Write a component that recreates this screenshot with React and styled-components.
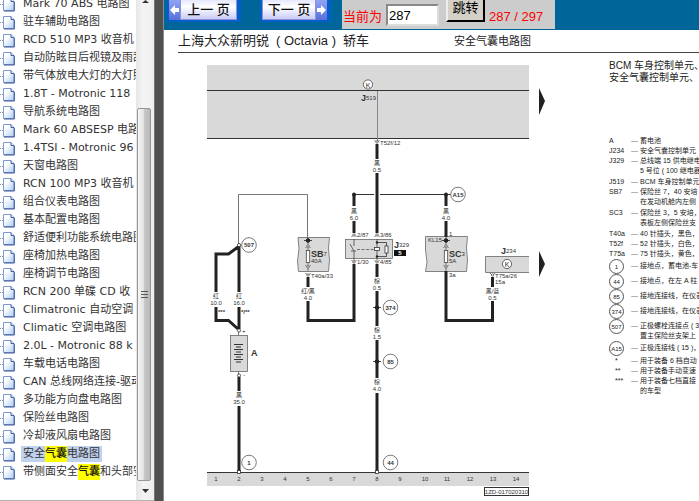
import React, { useState } from 'react';
import styled, { createGlobalStyle } from 'styled-components';

const GlobalStyle = createGlobalStyle`
  * {
    box-sizing: border-box;
  }

  body {
    margin: 0;
    background: #fff;
    color: #222;
    font-family: 'Liberation Sans', 'Noto Sans CJK SC', sans-serif;
    overflow: hidden;
  }
`;

const Layout = styled.div`
  display: grid;
  grid-template-columns: 154px 10px minmax(0, 1fr);
  height: 100vh;
`;

const Sidebar = styled.nav`
  display: grid;
  grid-template-columns: minmax(0, 1fr) 18px;
  min-height: 0;
  border-bottom: 1px solid #b4b4b4;
  overflow: hidden;
`;

const TreeList = styled.ul`
  margin: -5px 0 0;
  padding: 0;
  list-style: none;
  overflow: hidden;
`;

const TreeItem = styled.li`
  display: flex;
  align-items: center;
  height: 18px;

  &::before {
    content: '';
    flex: none;
    width: 3px;
    border-top: 1px dotted #888;
  }

  svg {
    flex: none;
  }
`;

const TreeLink = styled.a`
  margin-left: 6px;
  padding: 0 2px;
  background: ${({ $active }) => ($active ? '#c1d2ee' : 'transparent')};
  color: #333;
  font: 11px/16px 'DejaVu Sans', 'Noto Sans CJK SC', sans-serif;
  text-decoration: none;
  white-space: nowrap;

  mark {
    display: inline-block;
    background: #ff0;
    color: #111;
    font-weight: 500;
  }
`;

const Scrollbar = styled.div`
  display: flex;
  flex-direction: column;
  background: linear-gradient(to right, #e6e6e6, #f4f4f4 40%, #eee);
`;

const ScrollArrow = styled.button`
  display: flex;
  align-items: center;
  justify-content: center;
  height: ${({ $up }) => ($up ? '4px' : '19px')};
  padding: 0;
  border: 0;
  background: transparent;
`;

const ScrollTrack = styled.div`
  display: grid;
  flex: 1;
  grid-template-rows: 104fr 373fr;
`;

const ScrollThumb = styled.div`
  display: flex;
  grid-row: 2;
  flex-direction: column;
  align-items: center;
  justify-content: center;
  gap: 2px;
  margin: 0 3px 0 1px;
  border: 1px solid #979797;
  border-radius: 2px;
  background: linear-gradient(to right, #f5f5f5, #e3e3e3 45%, #c6c6c8 55%, #b9b9bb);

  span {
    width: 7px;
    height: 1px;
    background: #555;
  }
`;

const Splitter = styled.div`
  border-left: 1px solid #777;
  border-right: 1px solid #8c8c8c;
  background: #505050;
`;

const Main = styled.main`
  min-width: 0;
  overflow: hidden;
`;

const Toolbar = styled.form`
  display: flex;
  align-items: flex-start;
  height: 30px;
  padding-left: 3px;
  background: #069;
`;

const PageButton = styled.button`
  display: flex;
  flex-direction: ${({ $next }) => ($next ? 'row-reverse' : 'row')};
  align-items: stretch;
  width: ${({ $next }) => ($next ? '71px' : '74px')};
  height: 22px;
  margin-right: ${({ $next }) => ($next ? '11px' : '19px')};
  padding: 0 4px 2px 2px;
  border: 0;
  background: #0060c8;
  color: #111;
  font: 500 13px/20px 'Liberation Sans', 'Noto Sans CJK SC', sans-serif;
`;

const PageArrow = styled.span`
  display: flex;
  align-items: center;
  justify-content: center;
  width: 11px;
  background: linear-gradient(#8fa4f4, #5a6fd8);
`;

const PageLabel = styled.span`
  flex: 1;
  border: 1px solid #8c92dc;
  border-top: 0;
  background: linear-gradient(#e6e8ff, #fff 35%, #c9ccf8);
  text-align: center;
  white-space: nowrap;
`;

const JumpPanel = styled.div`
  display: flex;
  align-items: flex-start;
  width: 213px;
  height: 29px;
  background: #ccc;
  color: #f00;
  font-size: 13px;
  line-height: 16px;

  label {
    padding: 9px 4px 0 1px;
    white-space: nowrap;
  }

  output {
    padding: 9px 0 0 4px;
    white-space: nowrap;
  }
`;

const PageInput = styled.input`
  width: 53px;
  height: 22px;
  margin-top: 4px;
  padding: 0 1px;
  border: 2px inset #ddd;
  background: #fff;
  color: #000;
  font: 13px 'Liberation Sans', sans-serif;
`;

const JumpButton = styled.button`
  width: 39px;
  height: 22px;
  margin-left: 7px;
  padding: 0 0 6px;
  border: 2px outset #eee;
  border-top: 0;
  border-right-color: #555;
  border-bottom-color: #555;
  background: #d4d0c8;
  color: #000;
  font: 13px/14px 'Noto Sans CJK SC', sans-serif;
`;

const SheetHeader = styled.header`
  display: grid;
  grid-template-columns: 276px 1fr;
  align-items: center;
  height: 23px;
  margin-left: 14px;
  border-bottom: 1px solid #444;
  white-space: nowrap;
`;

const SheetTitle = styled.h1`
  display: flex;
  align-items: baseline;
  gap: 7px;
  margin: 0;
  font-size: 13px;
  font-weight: 400;
  line-height: 20px;
`;

const SheetSubtitle = styled.h2`
  margin: 0;
  font-size: 11px;
  font-weight: 400;
  line-height: 20px;
`;

const Sheet = styled.div`
  display: flex;
  padding: 7px 0 0 36px;
`;

const Diagram = styled.svg`
  flex: none;
  width: 350px;
  height: 440px;

  text {
    fill: #333;
    font-size: 6px;
    dominant-baseline: central;
  }
`;

const Legend = styled.section`
  flex: 1;
  min-width: 0;
  margin-left: 59px;
  overflow: hidden;
  white-space: nowrap;
`;

const LegendTitle = styled.p`
  margin: 0 0 52px;
  font-size: 10px;
  line-height: 12px;
`;

const LegendList = styled.dl`
  margin: 0;
  font-size: 7px;
  line-height: 10px;
`;

const LegendRow = styled.div`
  display: grid;
  grid-template-columns: 22px 9px 1fr;
  align-items: start;
  padding-bottom: ${({ $tall }) => ($tall ? '1px' : '0')};

  dt {
    grid-column: 1;
    grid-row: 1;
    padding-left: ${({ $star }) => ($star ? '6px' : '0')};
  }

  dd {
    margin: 0;
  }

  dd,
  &::before {
    padding-top: ${({ $round }) => ($round ? '2px' : '0')};
  }

  &::before {
    content: '—';
    grid-column: 2;
    grid-row: 1;
    color: #777;
  }
`;

const RoundKey = styled.span`
  display: flex;
  align-items: center;
  justify-content: center;
  width: 15px;
  height: 15px;
  border: 1px solid #555;
  border-radius: 50%;
  font-size: 6px;
`;

const TREE = [
  'Mark 70 ABS 电路图',
  '驻车辅助电路图',
  'RCD 510 MP3 收音机',
  '自动防眩目后视镜及雨刮',
  '带气体放电大灯的大灯照',
  '1.8T - Motronic 118',
  '导航系统电路图',
  'Mark 60 ABSESP 电路',
  '1.4TSI - Motronic 96',
  '天窗电路图',
  'RCN 100 MP3 收音机',
  '组合仪表电路图',
  '基本配置电路图',
  '舒适便利功能系统电路图',
  '座椅加热电路图',
  '座椅调节电路图',
  'RCN 200 单碟 CD 收',
  'Climatronic 自动空调',
  'Climatic 空调电路图',
  '2.0L - Motronic 88 k',
  '车载电话电路图',
  'CAN 总线网络连接-驱动',
  '多功能方向盘电路图',
  '保险丝电路图',
  '冷却液风扇电路图',
  '安全气囊电路图',
  '带侧面安全气囊和头部安',
];

const LEGEND = [
  { key: 'A', text: ['蓄电池'] },
  { key: 'J234', text: ['安全气囊控制单元'] },
  { key: 'J329', text: ['总线端 15 供电继电', '5 号位 ( 100 继电器'] },
  { key: 'J519', text: ['BCM 车身控制单元'] },
  { key: 'SB7', text: ['保险丝 7，40 安培', '在发动机舱内左侧'] },
  { key: 'SC3', text: ['保险丝 3，5 安培，', '表板左侧保险丝支'] },
  { key: 'T40a', text: ['40 针插头，黑色，'] },
  { key: 'T52f', text: ['52 针插头，白色，'] },
  { key: 'T75a', text: ['75 针插头，黄色，'] },
  { key: '1', round: true, text: ['接地点，蓄电池-车'] },
  { key: '44', round: true, text: ['接地点，在左 A 柱'] },
  { key: '85', round: true, text: ['接地连接线，在仪表'] },
  { key: '374', round: true, text: ['接地连接线，在仪表'] },
  { key: '507', round: true, text: ['正极螺栓连接点 ( 3', '置主保险丝支架上'] },
  { key: 'A15', round: true, text: ['正极连接线 ( 15 )，'] },
  { key: '*', star: true, text: ['用于装备 6 档自动'] },
  { key: '**', star: true, text: ['用于装备手动变速'] },
  { key: '***', star: true, text: ['用于装备七档直接', '的车型'] },
];

const TRACKS = [216, 239, 262, 285, 308, 331, 354, 377, 400, 425, 447, 470, 493, 516];

const PageIcon = () => (
  <svg width="12" height="15" viewBox="0 0 12 15">
    <defs>
      <linearGradient id="sheet" x1="0" y1="0" x2="1" y2="1">
        <stop offset="0.3" stopColor="#fff" />
        <stop offset="1" stopColor="#a9cdf5" />
      </linearGradient>
    </defs>
    <path d="M.5 1.5H8L11 4.5V13.5H.5Z" fill="url(#sheet)" stroke="#7d9ad6" />
    <path d="M11.3 5V14H1" fill="none" stroke="#3f5596" />
    <path d="M8 1.5V4.5H11" fill="#dbe8fb" stroke="#3f5fae" />
  </svg>
);

const Arrow = ({ left }) => (
  <svg width="9" height="10" viewBox="0 0 9 10">
    <path d={left ? 'M0 5L5 0V3H9V7H5V10Z' : 'M9 5L4 0V3H0V7H4V10Z'} fill="#fff" />
  </svg>
);

const highlight = text =>
  text.split('气囊').flatMap((part, i) => (i ? [<mark key={i}>气囊</mark>, part] : [part]));

/* diagram symbols */

const Node = ({ x, y, label }) => (
  <g>
    <circle cx={x} cy={y} r="7.3" fill="#fff" stroke="#555" strokeWidth="0.8" />
    <text x={x} y={y} textAnchor="middle" fontWeight="700">
      {label}
    </text>
  </g>
);

const WireLabel = ({ x, y, color, size }) => (
  <g textAnchor="middle">
    <text x={x} y={y}>{color}</text>
    <text x={x} y={y + 7}>{size}</text>
  </g>
);

const Plug = ({ x, y, down }) => {
  const bend = down ? 2 : -2;

  return (
    <g fill="none" stroke="#555" strokeWidth="0.8">
      <path d={`M${x - 2.5} ${y - bend}Q${x} ${y + bend} ${x + 2.5} ${y - bend}`} />
      <circle cx={x} cy={y} r="1.2" fill="#fff" />
    </g>
  );
};

const Joint = ({ x, y }) => (
  <g stroke="#222">
    <path d={`M${x - 4} ${y}H${x + 4}`} strokeWidth="0.8" />
    <circle cx={x} cy={y} r="1.8" fill="#222" />
  </g>
);

const Unit = ({ x, y, number }) => (
  <text x={x} y={y}>
    <tspan fontSize="9" fontWeight="700">J</tspan>
    <tspan>{number}</tspan>
  </text>
);

const Control = ({ x, y }) => (
  <g>
    <circle cx={x} cy={y} r="4.6" fill="#fff" stroke="#444" strokeWidth="0.8" />
    <text x={x} y={y} textAnchor="middle">
      <tspan fontSize="7">K</tspan>
    </text>
  </g>
);

const Fuse = ({ x, name, number, rating }) => (
  <g>
    <path d={`M${x} 237V271`} stroke="#777" />
    <Joint x={x} y={240.5} />
    <Plug x={x} y={246} />
    <Plug x={x} y={267} down />
    <rect x={x - 1.7} y="250.5" width="3.4" height="12" fill="#fff" stroke="#444" strokeWidth="0.8" />
    <text x={x + 3} y="253.5">
      <tspan fontWeight="700" fontSize="9">{name}</tspan>
      <tspan>{number}</tspan>
    </text>
    <text x={x + 3} y="261">{rating}</text>
  </g>
);

const WiringDiagram = () => (
  <Diagram viewBox="200 60 350 440" role="img" aria-label="安全气囊电路图">
    <rect x="207" y="65" width="322" height="73" fill="#d9d9d9" />
    <path d="M207 90.5H529M207 138.5H529" stroke="#333" />
    <path d="M377.5 91V142" stroke="#888" />
    <Control x={368} y={84.5} />
    <Unit x={361} y={98} number="519" />
    <path d="M539 88L545 101L539 115ZM539 251L545 264L539 277Z" fill="#222" />

    {/* thin supply lines */}
    <path d="M238.5 244V194.5H307.5V240M238.5 331V375" fill="none" stroke="#777" />
    <path d="M354 194.5H374M380 194.5H451" stroke="#333" />

    {/* component boxes */}
    <g fill="#d9d9d9" stroke="#666" strokeWidth="0.8">
      <path d="M298 237.5H329.5L328.5 248L329.5 260L328.5 271.5H298.5L297.5 261L299 249Z" />
      <path d="M425.5 236.5H467.5L466.5 248L467.5 260L466.5 271.5H425.5L427 262L425.5 250Z" />
      <rect x="345.5" y="239.5" width="47" height="19" />
      <rect x="230.5" y="335.5" width="17" height="36" />
      <path d="M529 256.5H485.5V272.5H529" />
    </g>

    {/* wires */}
    <g fill="none" stroke="#222" strokeWidth="3">
      <path d="M377 144V159M377 173V233M377 264V277M377 291V326M377 340V378M377 393V471" />
      <path d="M354 195V206M354 221V233M354 264V320.5H308V301M308 277V287" />
      <path d="M446 195V206M446 221V237M446 271V320.5H492.5V301M492.5 277V287" />
      <path d="M239 246V292M239 307V329M238 247L228.5 254H216V292M216 307V320.5H228.5L238 329" />
      <path d="M239 377V391M239 406V471" />
    </g>
    <circle cx="354" cy="194.5" r="2" fill="#222" />
    <circle cx="446" cy="194.5" r="2" fill="#222" />
    <Joint x={377} y={307.5} />
    <Joint x={377} y={361.5} />

    <WireLabel x={377} y={163} color="黑" size="0.5" />
    <WireLabel x={354} y={211} color="黑" size="6.0" />
    <WireLabel x={446} y={211} color="黑" size="4.0" />
    <WireLabel x={308} y={291} color="红/黑" size="4.0" />
    <WireLabel x={216} y={296} color="红" size="10.0" />
    <WireLabel x={239} y={296} color="红" size="16.0" />
    <WireLabel x={377} y={281} color="棕" size="0.5" />
    <WireLabel x={377} y={330} color="棕" size="1.5" />
    <WireLabel x={377} y={382} color="棕" size="4.0" />
    <WireLabel x={492.5} y={291} color="黑/蓝" size="0.5" />
    <WireLabel x={239} y={395} color="黑" size="35.0" />

    {/* relay */}
    <path d="M354 239V246M350 244L354 251M351 251H356M354 251V262M377 239V260" fill="none" stroke="#444" strokeWidth="0.8" />
    <path d="M357 249.5H374" stroke="#555" strokeWidth="0.8" strokeDasharray="3 1.5" />
    <rect x="374.5" y="247.5" width="5" height="3" fill="#fff" stroke="#333" strokeWidth="0.8" />
    <path d="M377 242.5H386.5V256.5H377" fill="none" stroke="#333" strokeWidth="0.8" />
    <rect x="385" y="246" width="3" height="7" fill="#fff" stroke="#333" strokeWidth="0.8" />
    <circle cx="377" cy="242.5" r="1.2" fill="#222" />
    <circle cx="377" cy="256.5" r="1.2" fill="#222" />
    <Unit x={394} y={245} number="329" />
    <rect x="394" y="250" width="12" height="6" fill="#111" />
    <text x="400" y="253" textAnchor="middle" fontWeight="700">
      <tspan fill="#fff">5</tspan>
    </text>

    <Plug x={377} y={142} down />
    <Plug x={354} y={235} />
    <Plug x={377} y={235} />
    <Plug x={354} y={262} down />
    <Plug x={377} y={262} down />
    <Plug x={308} y={275} down />
    <Plug x={492.5} y={275} down />
    <text x="380" y="143">T52f/12</text>
    <text x="357" y="235">2/87</text>
    <text x="380" y="235">3/86</text>
    <text x="357" y="262">1/30</text>
    <text x="380" y="262">4/85</text>
    <text x="311" y="276">T40a/33</text>
    <text x="495" y="276">T75a/26</text>
    <text x="495" y="282">15a</text>
    <text x="449" y="234">1</text>
    <text x="449" y="275">3a</text>
    <text x="428" y="240">KL15</text>

    <Fuse x={308} name="SB" number="7" rating="40A" />
    <Fuse x={446} name="SC" number="3" rating="5A" />
    <Control x={507} y={264} />
    <Unit x={501} y={251} number="234" />

    {/* battery */}
    <rect x="236" y="344" width="5" height="18" fill="#d9d9d9" />
    <path d="M234 344.5H243M234 349.5H243M234 354.5H243M234 359.5H243" stroke="#333" />
    <path d="M236 347H241M236 352H241M236 357H241M236 362H241" stroke="#333" />
    <text x="251" y="353" fontWeight="700">
      <tspan fontSize="9">A</tspan>
    </text>
    <text x="242" y="331">+</text>
    <text x="243" y="375">-</text>
    <text x="218" y="312" fontWeight="700">***</text>
    <text x="241" y="312" fontWeight="700">*/**</text>

    <g fill="#fff" stroke="#333" strokeWidth="0.8">
      <circle cx="239" cy="245" r="1.6" />
      <circle cx="239" cy="330.5" r="1.6" />
      <circle cx="239" cy="375.5" r="1.6" />
    </g>

    <Node x={249} y={245} label="507" />
    <Node x={458} y={194.5} label="A15" />
    <Node x={390.5} y={307.5} label="374" />
    <Node x={390.5} y={361.5} label="85" />
    <Node x={249} y={462.5} label="1" />
    <Node x={390.5} y={462.5} label="44" />

    {/* track numbers */}
    <rect x="207" y="472" width="322" height="14" fill="#d9d9d9" />
    <path d="M207 472.5H529" stroke="#333" />
    <g fill="#fff" stroke="#333" strokeWidth="0.8">
      <rect x="237.5" y="470.5" width="3" height="3" />
      <rect x="375.5" y="470.5" width="3" height="3" />
    </g>
    {TRACKS.map((x, i) => (
      <text key={x} x={x} y="479" textAnchor="middle">
        {i + 1}
      </text>
    ))}
    <rect x="484.5" y="487.5" width="44" height="8" fill="#fff" stroke="#333" />
    <text x="506.5" y="492" textAnchor="middle">1ZD-017020310</text>
  </Diagram>
);

const App = () => {
  const [page, setPage] = useState('287');

  return (
    <>
      <GlobalStyle />
      <Layout>
        <Sidebar>
          <TreeList>
            {TREE.map(name => (
              <TreeItem key={name}>
                <PageIcon />
                <TreeLink href="#" $active={name === '安全气囊电路图'}>
                  {highlight(name)}
                </TreeLink>
              </TreeItem>
            ))}
          </TreeList>
          <Scrollbar>
            <ScrollArrow type="button" $up>
              <svg width="7" height="4" viewBox="0 0 7 4">
                <path d="M3.5 0L7 3H0Z" fill="#333" />
              </svg>
            </ScrollArrow>
            <ScrollTrack>
              <ScrollThumb>
                <span />
                <span />
                <span />
              </ScrollThumb>
            </ScrollTrack>
            <ScrollArrow type="button">
              <svg width="7" height="4" viewBox="0 0 7 4">
                <path d="M0 0H7L3.5 4Z" fill="#333" />
              </svg>
            </ScrollArrow>
          </Scrollbar>
        </Sidebar>
        <Splitter />
        <Main>
          <Toolbar onSubmit={e => e.preventDefault()}>
            <PageButton type="button">
              <PageArrow><Arrow left /></PageArrow>
              <PageLabel>上一 页</PageLabel>
            </PageButton>
            <PageButton type="button" $next>
              <PageArrow><Arrow /></PageArrow>
              <PageLabel>下一 页</PageLabel>
            </PageButton>
            <JumpPanel>
              <label htmlFor="page">当前为</label>
              <PageInput id="page" value={page} onChange={e => setPage(e.target.value)} />
              <JumpButton type="submit">跳转</JumpButton>
              <output>287 / 297</output>
            </JumpPanel>
          </Toolbar>
          <SheetHeader>
            <SheetTitle>
              <span>上海大众新明锐</span>
              <span>( Octavia )</span>
              <span>轿车</span>
            </SheetTitle>
            <SheetSubtitle>安全气囊电路图</SheetSubtitle>
          </SheetHeader>
          <Sheet>
            <WiringDiagram />
            <Legend>
              <LegendTitle>
                BCM 车身控制单元、
                <br />
                安全气囊控制单元、
              </LegendTitle>
              <LegendList>
                {LEGEND.map(({ key, text, round, star }) => (
                  <LegendRow key={key} $round={round} $star={star} $tall={!round && text.length > 1}>
                    <dt>{round ? <RoundKey>{key}</RoundKey> : key}</dt>
                    <dd>
                      {text.map(line => (
                        <div key={line}>{line}</div>
                      ))}
                    </dd>
                  </LegendRow>
                ))}
              </LegendList>
            </Legend>
          </Sheet>
        </Main>
      </Layout>
    </>
  );
};

export default App;
